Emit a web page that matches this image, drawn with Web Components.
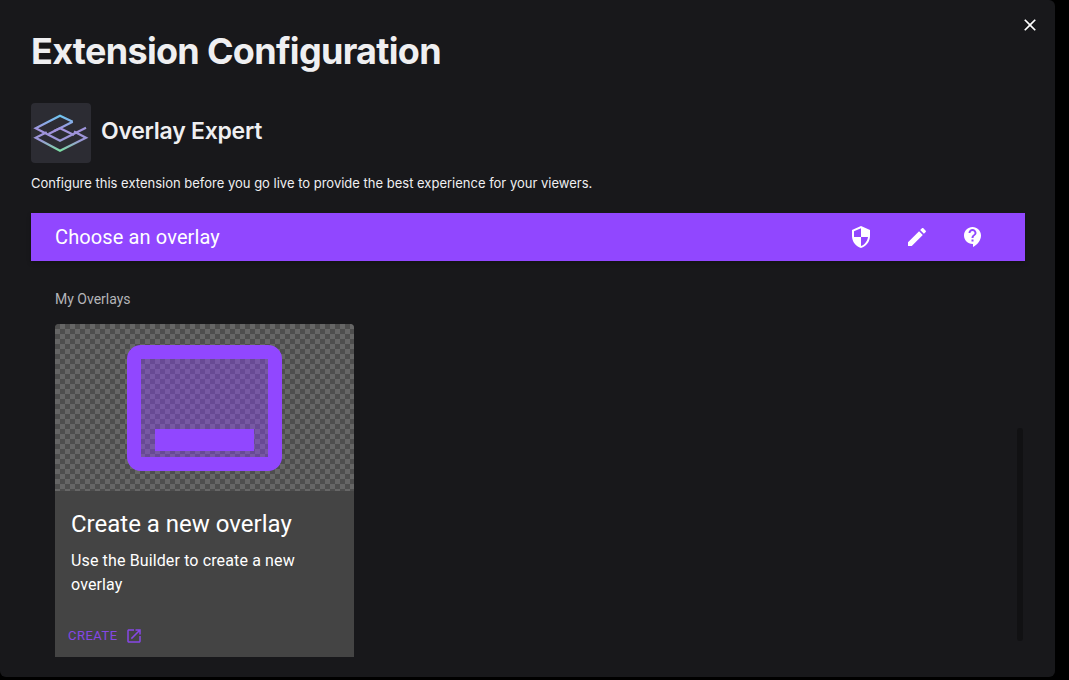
<!DOCTYPE html>
<html>
<head>
<meta charset="utf-8">
<title>Extension Configuration</title>
<style>
    html, body {
        margin: 0;
        height: 100%;
        background: #000;
        overflow: hidden;
    }
</style>
</head>
<body>
<config-modal>
    <span slot="title">Extension Configuration</span>
    <span slot="name">Overlay Expert</span>
    <span slot="description">Configure this extension before you go live to provide the best experience for your viewers.</span>
    <overlay-toolbar>Choose an overlay</overlay-toolbar>
    <overlay-list heading="My Overlays">
        <overlay-card action="CREATE">
            <span slot="title">Create a new overlay</span>
            Use the Builder to create a new overlay
        </overlay-card>
    </overlay-list>
</config-modal>

<script>
const modal_template = document.createElement("template");
modal_template.innerHTML = `
    <style>
        :host {
            display: block;
            position: relative;
            box-sizing: border-box;
            width: 1055px;
            height: 677px;
            padding: 0 30px 0 31px;
            background: #18181b;
            border-radius: 0 6px 6px 6px;
            overflow: hidden;
            color: #efeff1;
            font-family: "Roboto", sans-serif;
        }
        h1 {
            margin: 0;
            padding-top: 29px;
            font: 700 36px/44px "Inter", sans-serif;
            letter-spacing: -0.7px;
        }
        #app {
            display: flex;
            align-items: center;
            gap: 10px;
            margin-top: 30px;
        }
        #logo {
            display: block;
            width: 60px;
            height: 60px;
            background: #2c2c33;
            border-radius: 4px;
        }
        #name {
            margin-bottom: 4px;
            font: 600 23px/28px "Inter", sans-serif;
            letter-spacing: -0.25px;
        }
        p {
            margin: 12px 0 22px;
            font: 400 13px/16px "Inter", sans-serif;
        }
        #close {
            position: absolute;
            top: 15px;
            right: 15px;
            width: 20px;
            height: 20px;
            fill: #fff;
        }
        #scrollbar {
            position: absolute;
            top: 428px;
            left: 1017px;
            width: 6px;
            height: 213px;
            background: #111113;
            border-radius: 3px;
        }
    </style>
    <svg id="close" viewBox="0 0 24 24"><path d="M19 6.41L17.59 5 12 10.59 6.41 5 5 6.41 10.59 12 5 17.59 6.41 19 12 13.41 17.59 19 19 17.59 13.41 12z"/></svg>
    <h1><slot name="title"></slot></h1>
    <div id="app">
        <svg id="logo" viewBox="0 0 60 60" fill="none" stroke="url(#layers)" stroke-width="2.2">
            <defs>
                <linearGradient id="layers" gradientUnits="userSpaceOnUse" x1="30" y1="12" x2="30" y2="48">
                    <stop offset="0" stop-color="#6cc8f2"/>
                    <stop offset="0.4" stop-color="#a292dc"/>
                    <stop offset="0.7" stop-color="#9a96d6"/>
                    <stop offset="1" stop-color="#7ce0a4"/>
                </linearGradient>
            </defs>
            <path d="M41.7 18.7L29 12.7 4.7 25.3 29 37.7 55 24.7"/>
            <path d="M41.7 18.7L17.5 31"/>
            <path d="M23 28L29 25.3 43 32"/>
            <path d="M15.7 29.3L4.7 34.7 29 47.7 55 34.7 43 28.5"/>
        </svg>
        <div id="name"><slot name="name"></slot></div>
    </div>
    <p><slot name="description"></slot></p>
    <slot></slot>
    <div id="scrollbar"></div>
`;

class ConfigModal extends HTMLElement {
    constructor() {
        super();
        this.attachShadow({mode: 'open'});
        this.shadowRoot.appendChild(modal_template.content.cloneNode(true));
    }
}
customElements.define('config-modal', ConfigModal);

const toolbar_template = document.createElement("template");
toolbar_template.innerHTML = `
    <style>
        :host {
            display: flex;
            align-items: center;
            height: 48px;
            padding: 0 24px;
            background: #9147ff;
            color: #fff;
            font: 400 20px/28px "Roboto", sans-serif;
            letter-spacing: 0.12px;
            box-shadow: 0 2px 4px rgba(0, 0, 0, 0.25);
        }
        #title {
            flex: 1;
        }
        button {
            display: flex;
            align-items: center;
            justify-content: center;
            width: 56px;
            height: 48px;
            padding: 0;
            border: 0;
            background: none;
        }
        svg {
            width: 24px;
            height: 24px;
            fill: #fff;
        }
    </style>
    <div id="title"><slot></slot></div>
    <button><svg viewBox="0 0 24 24"><path d="M12 1L3 5v6c0 5.55 3.84 10.74 9 12 5.16-1.26 9-6.45 9-12V5l-9-4zm0 10.99h7c-.53 4.12-3.28 7.79-7 8.94V12H5V6.3l7-3.11v8.8z"/></svg></button>
    <button><svg viewBox="0 0 24 24"><path d="M3 17.25V21h3.75L17.81 9.94l-3.75-3.75L3 17.25zM20.71 7.04c.39-.39.39-1.02 0-1.41l-2.34-2.34c-.39-.39-1.02-.39-1.41 0l-1.83 1.83 3.75 3.75 1.83-1.83z"/></svg></button>
    <button><svg viewBox="0 0 24 24"><path d="M11.5 2C6.81 2 3 5.81 3 10.5S6.81 19 11.5 19h.5v3c4.86-2.34 8-7 8-11.5C20 5.81 16.19 2 11.5 2zm1 14.5h-2v-2h2v2zm0-3.5h-2c0-3.25 3-3 3-5 0-1.1-.9-2-2-2s-2 .9-2 2h-2c0-2.21 1.79-4 4-4s4 1.79 4 4c0 2.5-3 2.75-3 5z"/></svg></button>
`;

class OverlayToolbar extends HTMLElement {
    constructor() {
        super();
        this.attachShadow({mode: 'open'});
        this.shadowRoot.appendChild(toolbar_template.content.cloneNode(true));
    }
}
customElements.define('overlay-toolbar', OverlayToolbar);

const list_template = document.createElement("template");
list_template.innerHTML = `
    <style>
        :host {
            display: block;
            padding: 29px 24px 0;
        }
        h2 {
            margin: 0 0 16px;
            font: 400 14px/18px "Roboto", sans-serif;
            color: #b4b4b8;
        }
    </style>
    <h2 id="heading"></h2>
    <slot></slot>
`;

class OverlayList extends HTMLElement {
    constructor() {
        super();
        this.attachShadow({mode: 'open'});
        this.shadowRoot.appendChild(list_template.content.cloneNode(true));
        this.shadowRoot.querySelector("#heading").textContent = this.getAttribute("heading");
    }
}
customElements.define('overlay-list', OverlayList);

const card_template = document.createElement("template");
card_template.innerHTML = `
    <style>
        :host {
            display: block;
            width: 299px;
            height: 333px;
            background: #444444;
            border-radius: 4px 4px 0 0;
            overflow: hidden;
            color: #fff;
        }
        #preview {
            display: flex;
            align-items: center;
            justify-content: center;
            height: 167px;
            background: repeating-conic-gradient(#666666 0 25%, #4e4e4e 0 50%) 0 0 / 10px 10px;
        }
        #preview svg {
            display: block;
            width: 155px;
            height: 126px;
        }
        #body {
            padding: 17px 16px 0;
        }
        h3 {
            margin: 0 0 9px;
            font: 400 24px/32px "Roboto", sans-serif;
        }
        #text {
            height: 64px;
            font: 400 16px/24px "Roboto", sans-serif;
            letter-spacing: 0.13px;
        }
        #action {
            display: flex;
            align-items: center;
            gap: 7px;
            margin: 14px 0 0 -3px;
            font: 400 13px/18px "Roboto", sans-serif;
            letter-spacing: 0.5px;
            color: #8647e6;
        }
        #action svg {
            width: 18px;
            height: 18px;
            fill: #8647e6;
        }
    </style>
    <div id="preview">
        <svg viewBox="0 0 155 126">
            <rect x="14" y="14" width="127" height="98" fill="#9147ff" fill-opacity="0.4"/>
            <path fill="#9147ff" fill-rule="evenodd" d="M14 0H141A14 14 0 0 1 155 14V112A14 14 0 0 1 141 126H14A14 14 0 0 1 0 112V14A14 14 0 0 1 14 0ZM14 14V112H141V14Z"/>
            <rect x="28" y="84" width="99" height="22" fill="#9147ff"/>
        </svg>
    </div>
    <div id="body">
        <h3><slot name="title"></slot></h3>
        <div id="text"><slot></slot></div>
        <div id="action"><span id="label"></span><svg viewBox="0 0 24 24"><path d="M19 19H5V5h7V3H5c-1.11 0-2 .9-2 2v14c0 1.1.89 2 2 2h14c1.1 0 2-.9 2-2v-7h-2v7zM14 3v2h3.59l-9.83 9.83 1.41 1.41L19 6.41V10h2V3h-7z"/></svg></div>
    </div>
`;

class OverlayCard extends HTMLElement {
    constructor() {
        super();
        this.attachShadow({mode: 'open'});
        this.shadowRoot.appendChild(card_template.content.cloneNode(true));
        this.shadowRoot.querySelector("#label").textContent = this.getAttribute("action");
    }
}
customElements.define('overlay-card', OverlayCard);
</script>
</body>
</html>
